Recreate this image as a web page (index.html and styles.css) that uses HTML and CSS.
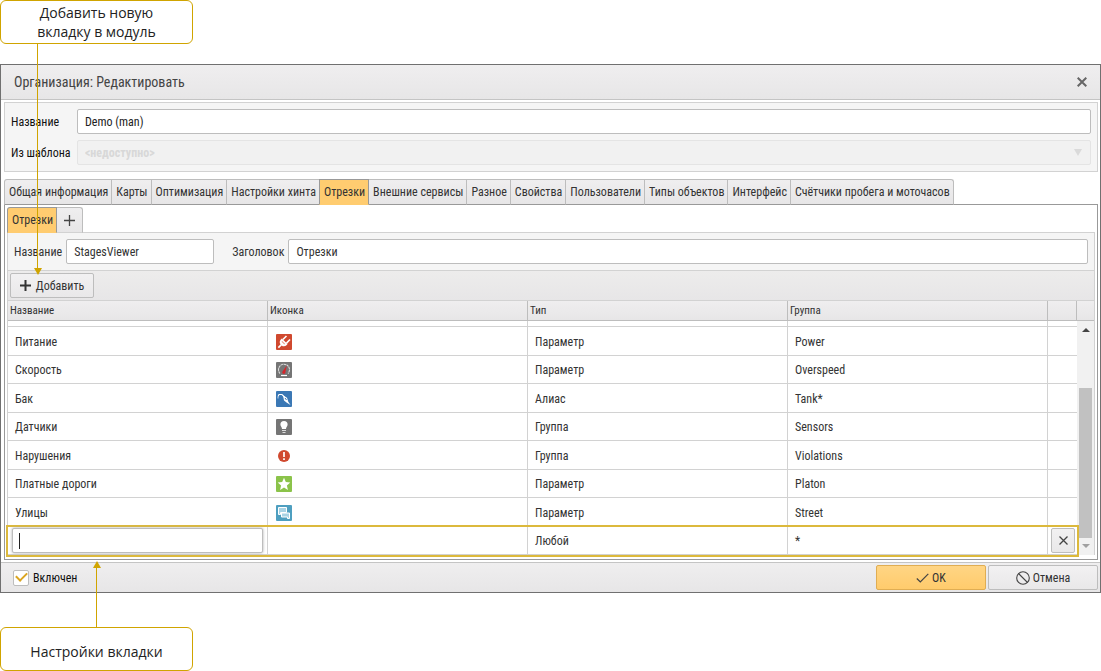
FILE: index.html
```html
<!DOCTYPE html>
<html lang="ru">
<head>
<meta charset="utf-8">
<title>Организация: Редактировать</title>
<link rel="stylesheet" href="styles.css">
</head>
<body>
<div class="callout callout-top">Добавить новую<br>вкладку в модуль</div>

<main class="dialog">
  <header class="dialog-header">
    <h1 class="dialog-title">Организация: Редактировать</h1>
    <button class="close" type="button" aria-label="Закрыть">
      <svg width="10" height="10" viewBox="0 0 10 10"><path d="M.7.700l8.600 8.600M9.300.700L.7 9.300" stroke="#666" stroke-width="2"/></svg>
    </button>
  </header>

  <div class="dialog-body">
    <section class="general">
      <label for="org-name">Название</label>
      <input class="field" id="org-name" type="text" value="Demo (man)">
      <label for="org-template">Из шаблона</label>
      <div class="select-wrap">
        <select class="field select" id="org-template" disabled><option>&lt;недоступно&gt;</option></select>
        <svg class="select-arrow" width="8" height="7" viewBox="0 0 8 7"><path d="M0 0h8L4 7z" fill="#dadada"/></svg>
      </div>
    </section>

    <nav class="tabs">
      <button class="tab" type="button">Общая информация</button>
      <button class="tab" type="button">Карты</button>
      <button class="tab" type="button">Оптимизация</button>
      <button class="tab" type="button">Настройки хинта</button>
      <button class="tab active" type="button">Отрезки</button>
      <button class="tab" type="button">Внешние сервисы</button>
      <button class="tab" type="button">Разное</button>
      <button class="tab" type="button">Свойства</button>
      <button class="tab" type="button">Пользователи</button>
      <button class="tab" type="button">Типы объектов</button>
      <button class="tab" type="button">Интерфейс</button>
      <button class="tab" type="button">Счётчики пробега и моточасов</button>
    </nav>

    <section class="panel">
      <nav class="subtabs">
        <button class="tab active" type="button">Отрезки</button>
        <button class="tab add-tab" type="button" aria-label="Добавить вкладку">
          <svg width="11" height="11" viewBox="0 0 11 11"><path d="M5.500 0v11M0 5.500h11" stroke="#444" stroke-width="1.300"/></svg>
        </button>
      </nav>
      <div class="module">
        <div class="module-form">
          <label for="mod-name">Название</label>
          <input class="field short" id="mod-name" type="text" value="StagesViewer">
          <label class="second" for="mod-title">Заголовок</label>
          <input class="field long" id="mod-title" type="text" value="Отрезки">
        </div>
        <div class="toolbar">
          <button class="btn add" type="button">
            <svg width="11" height="11" viewBox="0 0 11 11"><path d="M5.500 0v11M0 5.500h11" stroke="#333" stroke-width="2"/></svg>
            Добавить
          </button>
        </div>
        <div class="grid">
          <table class="table">
            <colgroup><col><col><col><col><col class="col-action"></colgroup>
            <thead>
              <tr><th>Название</th><th>Иконка</th><th>Тип</th><th>Группа</th><th></th></tr>
            </thead>
            <tbody>
              <tr class="sliver"><td></td><td></td><td></td><td></td><td></td></tr>
              <tr><td>Питание</td><td>
                <svg class="icon" viewBox="0 0 16 16"><rect width="16" height="16" rx="1" fill="#d0492f"/><g transform="rotate(45 8 8)"><path d="M4 7h8v1.500c0 2-1.500 3.500-3.200 3.500v4H7.200v-4C5.500 12 4 10.500 4 8.500z" fill="#fff"/><path d="M5.500 2v5M10.500 2v5" stroke="#fff" stroke-width="1.600"/><path d="M6 9h4" stroke="#e59a8a"/></g></svg>
              </td><td>Параметр</td><td>Power</td><td></td></tr>
              <tr><td>Скорость</td><td>
                <svg class="icon" viewBox="0 0 16 16"><rect width="16" height="16" rx="1" fill="#757575"/><path d="M4 11.500A5.500 5.500 0 1 1 12 11.500" fill="none" stroke="#ddd" stroke-width="1.100" stroke-dasharray="2.500 .5"/><path d="M5 13.500h6" stroke="#fff" stroke-width="1.200"/><path d="M10.800 3.500L6.700 9.200a1.600 1.600 0 1 0 2.700.8z" fill="#d8232a"/></svg>
              </td><td>Параметр</td><td>Overspeed</td><td></td></tr>
              <tr><td>Бак</td><td>
                <svg class="icon" viewBox="0 0 16 16"><rect width="16" height="16" rx="1" fill="#3b78b5"/><path d="M2 5.500l1-2h3l3 3" fill="none" stroke="#fff" stroke-width="1.100"/><path d="M7 4.500l4 2.200 1.300 4L14.500 14l-4-2.500L8 9.500z" fill="#fff"/><path d="M9 7l1.500 2" stroke="#3b78b5"/><path d="M2 5.500v2" stroke="#bcd3ea"/></svg>
              </td><td>Алиас</td><td>Tank*</td><td></td></tr>
              <tr><td>Датчики</td><td>
                <svg class="icon" viewBox="0 0 16 16"><rect width="16" height="16" rx="1" fill="#757575"/><path d="M8 2a3.600 3.600 0 0 1 3.600 3.600C11.600 7.500 10 8 10 10H6c0-2-1.600-2.500-1.600-4.400A3.600 3.600 0 0 1 8 2z" fill="#fff"/><path d="M6 11.500h4M6.500 13.500h3" stroke="#ddd"/></svg>
              </td><td>Группа</td><td>Sensors</td><td></td></tr>
              <tr><td>Нарушения</td><td>
                <svg class="icon" viewBox="0 0 16 16"><circle cx="8" cy="8" r="6" fill="#d0492f"/><path d="M8 4v5M8 10.300v1.700" stroke="#fff" stroke-width="1.700"/></svg>
              </td><td>Группа</td><td>Violations</td><td></td></tr>
              <tr><td>Платные дороги</td><td>
                <svg class="icon" viewBox="0 0 16 16"><rect width="16" height="16" rx="1" fill="#8bc34a"/><path d="M8 1.700l1.800 4.300 4.500.4-3.400 3 1 4.500L8 11.500l-3.900 2.400 1-4.500-3.400-3 4.500-.4z" fill="#fff"/></svg>
              </td><td>Параметр</td><td>Platon</td><td></td></tr>
              <tr><td>Улицы</td><td>
                <svg class="icon" viewBox="0 0 16 16"><rect width="16" height="16" rx="1" fill="#4e9fc0"/><path d="M2.500 2.500h8v5h-6v2h-2z" fill="#a9d3e4" stroke="#fff"/><path d="M5.500 8h8v5.500h-2V12h-6z" fill="#a9d3e4" stroke="#fff"/></svg>
              </td><td>Параметр</td><td>Street</td><td></td></tr>
              <tr class="editing"><td class="cell-edit"><div class="edit-wrap"><input class="field" type="text" aria-label="Название"><span class="caret"></span></div></td><td></td><td>Любой</td><td>*</td><td class="cell-action">
                <button class="btn remove" type="button" aria-label="Удалить"><svg width="9" height="9" viewBox="0 0 9 9"><path d="M.5.500l8 8M8.500.500l-8 8" stroke="#444" stroke-width="1.300"/></svg></button>
              </td></tr>
            </tbody>
          </table>
          <div class="scroll">
            <div class="scroll-cap"></div>
            <div class="scroll-track">
              <svg width="8" height="4" viewBox="0 0 8 4"><path d="M4 0l4 4H0z" fill="#444"/></svg>
              <div class="scroll-thumb"></div>
              <svg width="8" height="4" viewBox="0 0 8 4"><path d="M0 0h8L4 4z" fill="#a0a0a0"/></svg>
            </div>
          </div>
        </div>
      </div>
    </section>
  </div>

  <footer class="dialog-footer">
    <label class="enabled"><input class="check" type="checkbox" checked>Включен</label>
    <button class="btn ok" type="button">
      <svg width="13" height="10" viewBox="0 0 13 10"><path d="M.8 5.500l3.500 3.500L12.300.800" fill="none" stroke="#444" stroke-width="1.200"/></svg>OK</button>
    <button class="btn cancel" type="button">
      <svg width="14" height="14" viewBox="0 0 14 14"><circle cx="7" cy="7" r="6.300" fill="none" stroke="#444" stroke-width="1.100"/><path d="M2.500 2.500l9 9" stroke="#444" stroke-width="1.100"/></svg>Отмена</button>
  </footer>
</main>

<div class="callout callout-bottom">Настройки вкладки</div>
</body>
</html>
```
FILE: styles.css
```css
* { box-sizing: border-box; }

body {
  margin: 0;
  background: #fff;
  color: #333;
  font: 12px/16px "Roboto Condensed", "Liberation Sans Narrow", Roboto, sans-serif;
}

button, input, select { font: inherit; color: inherit; }
button { padding: 0; }
svg { display: block; flex: none; }

/* Callouts */
.callout {
  position: relative;
  z-index: 2;
  display: flex;
  align-items: center;
  justify-content: center;
  width: 193px;
  height: 44px;
  border: 1px solid #d0a400;
  border-radius: 6px;
  background: #fff;
  color: #222;
  font: 14px/19px "Open Sans", "Noto Sans", sans-serif;
  text-align: center;
}
.callout::before,
.callout::after { content: ""; position: absolute; }
.callout::before { width: 1px; background: #d0a400; }
.callout::after { border: 4px solid transparent; }
.callout-top { margin-bottom: 20px; }
.callout-top::before { left: 36px; top: 100%; height: 226px; }
.callout-top::after { left: 33px; top: 267px; border-top: 7px solid #d0a400; border-bottom: 0; }
.callout-bottom { margin-top: 34px; padding-top: 4px; }
.callout-bottom::before { left: 95px; bottom: 100%; height: 62px; }
.callout-bottom::after { left: 92px; bottom: 100%; margin-bottom: 60px; border-bottom: 7px solid #d0a400; border-top: 0; }

/* Dialog */
.dialog { border: 1px solid #707070; background: #fff; }
.dialog-header {
  display: flex;
  align-items: center;
  justify-content: space-between;
  height: 35px;
  padding: 0 13px;
  border-bottom: 1px solid #c4c4c4;
  background: linear-gradient(#efeeef, #e7e6e7);
}
.dialog-title { margin: 0; font-size: 14px; font-weight: 400; color: #444; }
.close { border: 0; background: none; }
.dialog-body { padding: 2px 2px 2px 3px; }

.field {
  width: 100%;
  height: 25px;
  padding: 0 7px;
  border: 1px solid #bdbdbd;
  border-radius: 2px;
  background: #fff;
  outline: 0;
}
.general {
  display: grid;
  grid-template-columns: 60px 1fr;
  gap: 6px;
  align-items: center;
  padding: 6px;
  border: 1px solid #d2d2d2;
  background: #f5f5f5;
  color: #111;
}
.general .field { color: #222; }
.select-wrap { position: relative; }
.general .select {
  appearance: none;
  border-color: #e4e4e4;
  background: #f1f1f1;
  color: #d8d8d8;
  font-weight: 700;
  opacity: 1;
}
.select-arrow { position: absolute; right: 9px; top: 9px; }

/* Tabs */
.tabs, .subtabs { display: flex; position: relative; z-index: 1; }
.tabs { margin: 7px 0 -1px; }
.tab {
  height: 26px;
  margin-right: -1px;
  padding: 0 3px 0 4px;
  border: 1px solid #bdbdbd;
  border-bottom-color: #999;
  background: linear-gradient(#efeeef, #e7e6e7);
  white-space: nowrap;
}
.tab:first-child { border-top-left-radius: 3px; }
.tab:last-child { border-top-right-radius: 3px; }
.tab.active { position: relative; border-color: #999; border-bottom-color: #ffcc70; background: #ffcc70; }
.panel { padding: 2px 2px 4px; border: 1px solid #999; }
.subtabs { margin-bottom: -1px; }
.subtabs .tab { border-bottom-color: #d2d2d2; }
.subtabs .active { border-bottom-color: #ffcc70; }
.subtabs .add-tab { padding: 0 7px; }

/* Module */
.module { border: 1px solid #d2d2d2; border-bottom: 0; }
.module-form {
  display: flex;
  align-items: center;
  gap: 4px;
  padding: 6px;
  background: #f5f5f5;
}
.module-form .short { width: 148px; }
.module-form .second { margin-left: 14px; }
.module-form .long { flex: 1; }
.toolbar {
  padding: 2px;
  border-top: 1px solid #d2d2d2;
  background: linear-gradient(#edecec, #e7e6e7);
}
.btn {
  display: flex;
  align-items: center;
  justify-content: center;
  gap: 5px;
  height: 25px;
  border: 1px solid #bdbdbd;
  border-radius: 2px;
  background: linear-gradient(#f2f1f2, #e9e8e9);
}
.add { width: 84px; }

/* Grid */
.grid { display: grid; grid-template-columns: 1fr 17px; border-top: 1px solid #d2d2d2; }
.table { position: relative; z-index: 1; width: 100%; table-layout: fixed; border-collapse: separate; border-spacing: 0; }
.col-action { width: 29px; }
th {
  height: 20px;
  padding: 0 2px;
  border-right: 1px solid #bdbdbd;
  border-bottom: 1px solid #bdbdbd;
  background: linear-gradient(#efeeef, #e7e6e7);
  font-size: 11px;
  line-height: 12px;
  font-weight: 400;
  text-align: left;
}
td {
  height: 29px;
  padding: 1px 7px 0;
  line-height: 16px;
  border-right: 1px solid #d2d2d2;
  border-bottom: 1px solid #d2d2d2;
}
tr:nth-child(odd) td { height: 28px; }
.sliver td { padding: 0; }
tr.sliver:nth-child(odd) td { height: 6px; }
td:last-child { border-right: 0; }
.icon { width: 16px; height: 16px; margin-left: 1px; }
.editing { outline: 2px solid #dcb93c; }
.editing .cell-edit { padding: 0 4px; }
.editing .cell-action { padding: 0 2px 0 3px; }
.remove { width: 24px; }
.edit-wrap { position: relative; }
.edit-wrap .field { display: block; box-shadow: 0 0 3px #aaa; }
.caret { position: absolute; left: 7px; top: 5px; width: 1px; height: 16px; background: #222; }

.scroll { display: flex; flex-direction: column; }
.scroll-cap { height: 20px; border-bottom: 1px solid #bdbdbd; background: linear-gradient(#efeeef, #e7e6e7); }
.scroll-track {
  flex: 1;
  display: flex;
  flex-direction: column;
  align-items: center;
  padding: 7px 2px;
  background: #f1f1f1;
}
.scroll-thumb { width: 13px; height: 150px; margin: auto 0 6px; background: #c1c1c1; }

/* Footer */
.dialog-footer {
  display: flex;
  align-items: center;
  gap: 2px;
  padding: 2px;
  border-top: 1px solid #c4c4c4;
  background: linear-gradient(#efeeef, #e7e6e7);
}
.enabled { display: flex; align-items: center; gap: 4px; margin: 0 auto 0 10px; color: #111; }
.check {
  appearance: none;
  width: 16px;
  height: 16px;
  margin: 0;
  border: 1px solid #bdbdbd;
  border-radius: 2px;
  background: #fff;
  display: grid;
  place-items: center;
}
.check:checked::before {
  content: "";
  width: 9px;
  height: 5px;
  margin-bottom: 4px;
  border: solid #dba520;
  border-width: 0 0 2px 2px;
  transform: rotate(-45deg);
}
.ok, .cancel { width: 110px; gap: 3px; }
.ok { border-color: #e0ad52; background: linear-gradient(#ffd584, #ffcb6c); }
```
